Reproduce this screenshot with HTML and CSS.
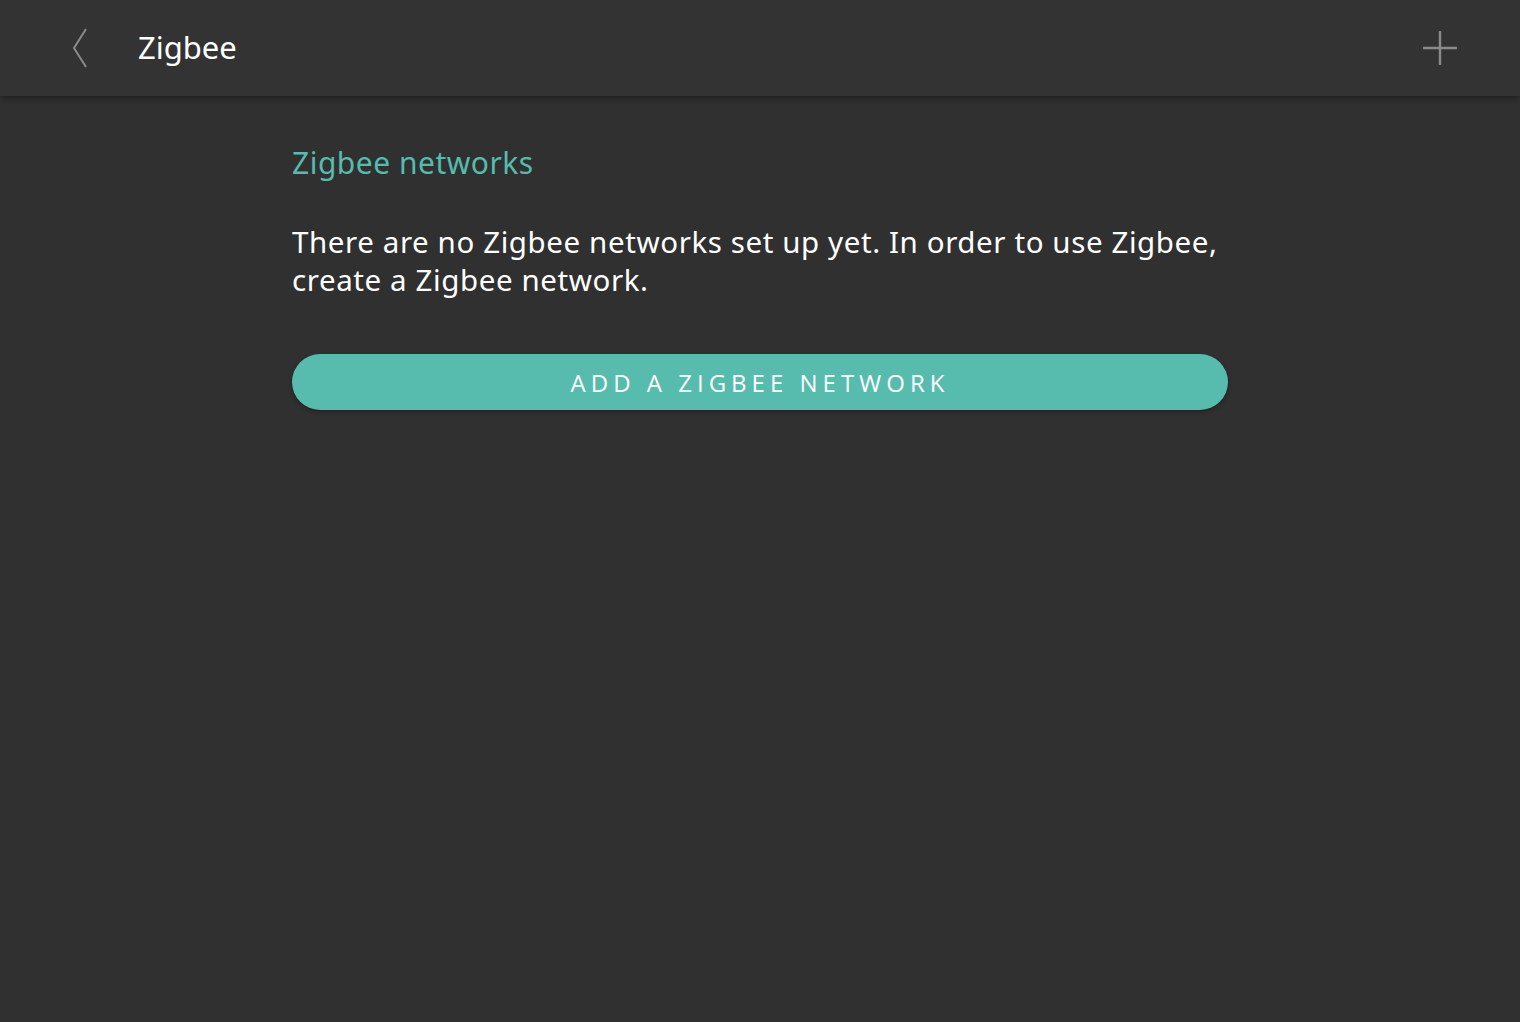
FILE: index.html
```html
<!DOCTYPE html>
<html lang="en">
<head>
<meta charset="utf-8">
<title>Zigbee</title>
<link rel="stylesheet" href="styles.css">
</head>
<body>
<header class="topbar">
  <button class="icon-btn back" aria-label="Back">
    <svg width="16" height="40" viewBox="0 0 16 40"><polyline points="14,1 2,20 14,39" fill="none" stroke="#8a8a8a" stroke-width="2"/></svg>
  </button>
  <h1 class="title">Zigbee</h1>
  <button class="icon-btn add" aria-label="Add">
    <svg width="36" height="36" viewBox="0 0 36 36"><path d="M18 1V35M1 18H35" stroke="#8a8a8a" stroke-width="2.4"/></svg>
  </button>
</header>
<main class="content">
  <h2 class="section-title">Zigbee networks</h2>
  <p class="message">There are no Zigbee networks set up yet. In order to use Zigbee, create a Zigbee network.</p>
  <button class="primary-btn">Add a Zigbee network</button>
</main>
</body>
</html>
```
FILE: styles.css
```css
html, body {
  margin: 0;
  padding: 0;
  background: #303030;
  height: 100%;
}
body {
  font-family: "Noto Sans", "Open Sans", sans-serif;
  color: #ffffff;
}
.topbar {
  height: 96px;
  background: #333333;
  display: flex;
  align-items: center;
  box-shadow: 0 2px 6px rgba(0,0,0,0.35);
  position: relative;
}
.icon-btn {
  background: none;
  border: 0;
  padding: 0;
  display: flex;
  align-items: center;
  justify-content: center;
}
.back {
  margin-left: 72px;
  width: 16px;
  height: 40px;
}
.title {
  margin: 0 0 2px 50px;
  font-weight: 400;
  font-size: 31px;
  color: #ffffff;
}
.add {
  margin-left: auto;
  margin-right: 62px;
  width: 36px;
  height: 36px;
}
.content {
  width: 936px;
  margin: 0 auto;
  padding-top: 48px;
}
.section-title {
  margin: 0;
  font-weight: 400;
  font-size: 30px;
  letter-spacing: 0.5px;
  line-height: 38px;
  color: #57bbae;
}
.message {
  margin: 41px 0 0 0;
  font-size: 29.5px;
  letter-spacing: 0.6px;
  line-height: 38px;
}
.primary-btn {
  display: block;
  margin-top: 55px;
  width: 100%;
  height: 56px;
  border: 0;
  border-radius: 28px;
  background: #57bbae;
  color: #ffffff;
  font-family: "Open Sans", sans-serif;
  font-size: 24px;
  letter-spacing: 5px;
  text-indent: 0;
  text-transform: uppercase;
  box-shadow: 0 2px 4px rgba(0,0,0,0.3);
}
```
